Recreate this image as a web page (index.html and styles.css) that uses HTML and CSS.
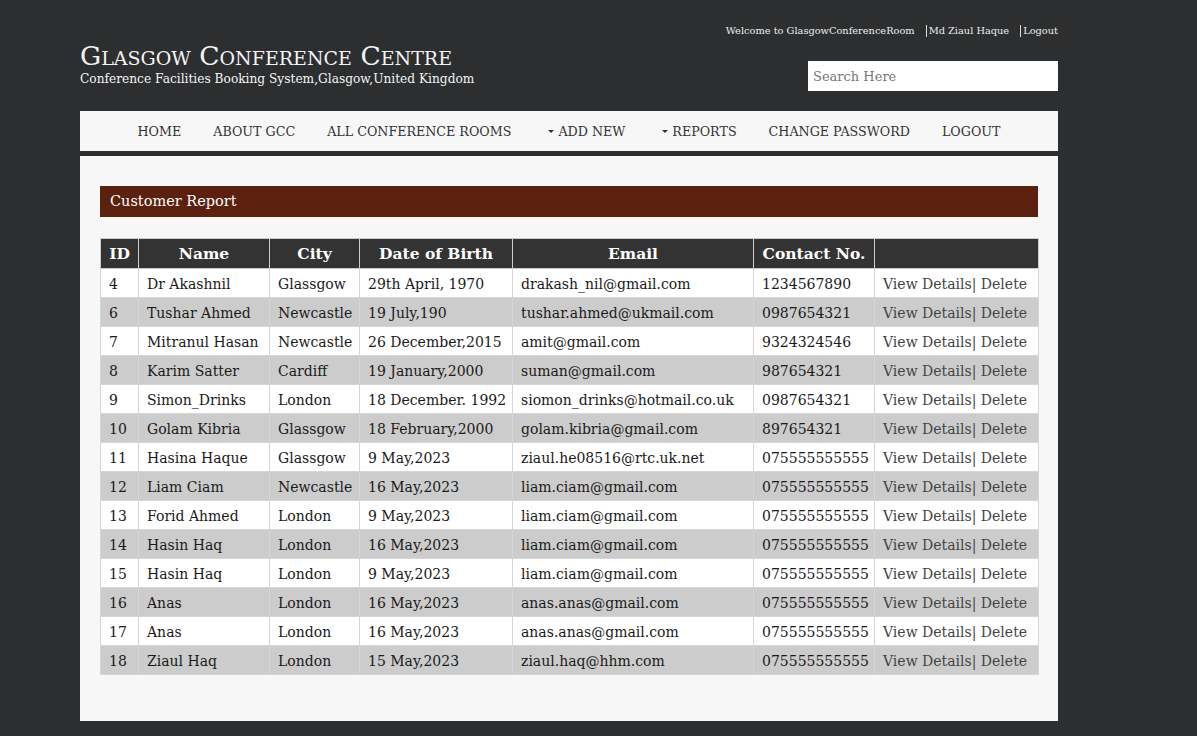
FILE: index.html
```html
<!DOCTYPE html>
<html lang="en">
<head>
<meta charset="utf-8">
<title>Customer Report - Glasgow Conference Centre</title>
<link rel="stylesheet" href="styles.css">
</head>
<body>
<div class="page">
  <header class="masthead">
    <div class="brand">
      <h1 class="brand-title">Glasgow Conference Centre</h1>
      <p class="brand-sub">Conference Facilities Booking System,Glasgow,United Kingdom</p>
    </div>
    <div class="utility">
      <div class="user-links">
        <span class="welcome">Welcome to GlasgowConferenceRoom</span>
        <a class="user-link" href="#">Md Ziaul Haque</a>
        <a class="user-link" href="#">Logout</a>
      </div>
      <input class="search" type="text" placeholder="Search Here">
    </div>
  </header>

  <nav class="mainnav">
    <a href="#" class="nav-item">HOME</a>
    <a href="#" class="nav-item">ABOUT GCC</a>
    <a href="#" class="nav-item">ALL CONFERENCE ROOMS</a>
    <a href="#" class="nav-item drop"><span class="caret"></span>ADD NEW</a>
    <a href="#" class="nav-item drop"><span class="caret"></span>REPORTS</a>
    <a href="#" class="nav-item">CHANGE PASSWORD</a>
    <a href="#" class="nav-item">LOGOUT</a>
  </nav>

  <main class="panel">
    <h2 class="report-title">Customer Report</h2>
    <table class="report">
      <colgroup>
        <col class="c-id"><col class="c-name"><col class="c-city"><col class="c-dob"><col class="c-email"><col class="c-phone"><col class="c-act">
      </colgroup>
      <thead>
        <tr><th>ID</th><th>Name</th><th>City</th><th>Date of Birth</th><th>Email</th><th>Contact No.</th><th></th></tr>
      </thead>
      <tbody>
        <tr><td>4</td><td>Dr Akashnil</td><td>Glassgow</td><td>29th April, 1970</td><td>drakash_nil@gmail.com</td><td>1234567890</td><td class="act"><a href="#">View Details</a>| <a href="#">Delete</a></td></tr>
        <tr><td>6</td><td>Tushar Ahmed</td><td>Newcastle</td><td>19 July,190</td><td>tushar.ahmed@ukmail.com</td><td>0987654321</td><td class="act"><a href="#">View Details</a>| <a href="#">Delete</a></td></tr>
        <tr><td>7</td><td>Mitranul Hasan</td><td>Newcastle</td><td>26 December,2015</td><td>amit@gmail.com</td><td>9324324546</td><td class="act"><a href="#">View Details</a>| <a href="#">Delete</a></td></tr>
        <tr><td>8</td><td>Karim Satter</td><td>Cardiff</td><td>19 January,2000</td><td>suman@gmail.com</td><td>987654321</td><td class="act"><a href="#">View Details</a>| <a href="#">Delete</a></td></tr>
        <tr><td>9</td><td>Simon_Drinks</td><td>London</td><td>18 December. 1992</td><td>siomon_drinks@hotmail.co.uk</td><td>0987654321</td><td class="act"><a href="#">View Details</a>| <a href="#">Delete</a></td></tr>
        <tr><td>10</td><td>Golam Kibria</td><td>Glassgow</td><td>18 February,2000</td><td>golam.kibria@gmail.com</td><td>897654321</td><td class="act"><a href="#">View Details</a>| <a href="#">Delete</a></td></tr>
        <tr><td>11</td><td>Hasina Haque</td><td>Glassgow</td><td>9 May,2023</td><td>ziaul.he08516@rtc.uk.net</td><td>075555555555</td><td class="act"><a href="#">View Details</a>| <a href="#">Delete</a></td></tr>
        <tr><td>12</td><td>Liam Ciam</td><td>Newcastle</td><td>16 May,2023</td><td>liam.ciam@gmail.com</td><td>075555555555</td><td class="act"><a href="#">View Details</a>| <a href="#">Delete</a></td></tr>
        <tr><td>13</td><td>Forid Ahmed</td><td>London</td><td>9 May,2023</td><td>liam.ciam@gmail.com</td><td>075555555555</td><td class="act"><a href="#">View Details</a>| <a href="#">Delete</a></td></tr>
        <tr><td>14</td><td>Hasin Haq</td><td>London</td><td>16 May,2023</td><td>liam.ciam@gmail.com</td><td>075555555555</td><td class="act"><a href="#">View Details</a>| <a href="#">Delete</a></td></tr>
        <tr><td>15</td><td>Hasin Haq</td><td>London</td><td>9 May,2023</td><td>liam.ciam@gmail.com</td><td>075555555555</td><td class="act"><a href="#">View Details</a>| <a href="#">Delete</a></td></tr>
        <tr><td>16</td><td>Anas</td><td>London</td><td>16 May,2023</td><td>anas.anas@gmail.com</td><td>075555555555</td><td class="act"><a href="#">View Details</a>| <a href="#">Delete</a></td></tr>
        <tr><td>17</td><td>Anas</td><td>London</td><td>16 May,2023</td><td>anas.anas@gmail.com</td><td>075555555555</td><td class="act"><a href="#">View Details</a>| <a href="#">Delete</a></td></tr>
        <tr><td>18</td><td>Ziaul Haq</td><td>London</td><td>15 May,2023</td><td>ziaul.haq@hhm.com</td><td>075555555555</td><td class="act"><a href="#">View Details</a>| <a href="#">Delete</a></td></tr>
      </tbody>
    </table>
  </main>
</div>
</body>
</html>
```

FILE: styles.css
```css
* { box-sizing: border-box; }
html, body {
  margin: 0;
  padding: 0;
  background: #2d2e30;
  font-family: "DejaVu Serif", "Liberation Serif", serif;
  color: #222;
}
.page {
  width: 978px;
  margin-left: 80px;
}
a { text-decoration: none; color: inherit; }

/* masthead */
.masthead {
  height: 111px;
  display: flex;
  justify-content: space-between;
  align-items: flex-start;
}
.brand { padding-top: 41px; color: #fff; }
.brand-title {
  margin: 0;
  font-size: 26.5px;
  font-weight: normal;
  font-variant: small-caps;
  line-height: 30px;
  color: #f4f4f4;
}
.brand-sub {
  margin: 0;
  font-size: 12.2px;
  line-height: 16px;
  color: #f4f4f4;
}
.utility {
  display: flex;
  flex-direction: column;
  align-items: flex-end;
  padding-top: 24px;
}
.user-links {
  display: flex;
  align-items: center;
  font-size: 9.8px;
  line-height: 14px;
  color: #eee;
}
.user-link {
  margin-left: 11px;
  padding-left: 2px;
  border-left: 1px solid #ddd;
  line-height: 12px;
}
.search {
  margin-top: 23px;
  width: 250px;
  height: 30px;
  border: 0;
  padding: 0 5px;
  font-family: inherit;
  font-size: 13px;
  background: #fff;
  color: #333;
  outline: none;
}
.search::placeholder { color: #777; }

/* nav */
.mainnav {
  height: 40px;
  background: #f7f7f7;
  display: flex;
  justify-content: center;
  align-items: center;
  gap: 32px;
  font-size: 12.7px;
  color: #333;
}
.nav-item { display: inline-flex; align-items: center; }
.nav-item.drop { margin-left: 5px; }
.caret {
  display: inline-block;
  width: 0; height: 0;
  border-left: 3px solid transparent;
  border-right: 3px solid transparent;
  border-top: 3px solid #333;
  margin-right: 4px;
}

/* panel */
.panel {
  margin-top: 5px;
  background: #f7f7f7;
  padding: 30px 20px 46px;
}
.report-title {
  margin: 0 0 21px;
  height: 31px;
  line-height: 31px;
  padding-left: 10px;
  background: #5c210e;
  color: #fff;
  font-size: 14.5px;
  font-weight: normal;
}
.report {
  width: 938px;
  table-layout: fixed;
  border-collapse: collapse;
  font-size: 14px;
}
.c-id { width: 38px; }
.c-name { width: 131px; }
.c-city { width: 90px; }
.c-dob { width: 153px; }
.c-email { width: 241px; }
.c-phone { width: 121px; }
.c-act { width: 164px; }
.report th {
  height: 30px;
  background: #333;
  color: #fff;
  font-size: 15.5px;
  font-weight: bold;
  text-align: center;
  border: 1px solid #ccc;
  padding: 0 4px;
}
.report td {
  height: 29px;
  padding: 2px 8px 0;
  border: 1px solid #d6d6d6;
  white-space: nowrap;
  overflow: hidden;
  color: #1a1a1a;
  background: #fff;
}
.report tbody tr:nth-child(even) td { background: #cccccc; }
.report td.act { color: #444; }
```
